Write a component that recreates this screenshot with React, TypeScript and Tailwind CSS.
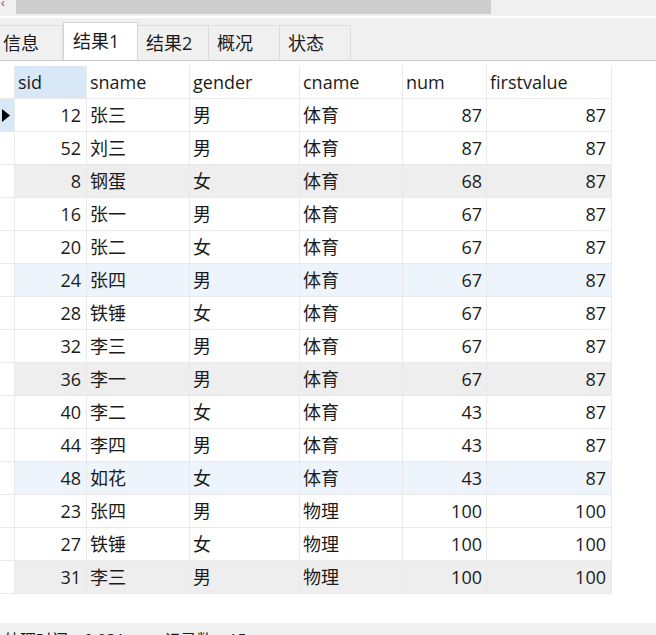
import React from "react";

type Row = {
  sid: number;
  sname: string;
  gender: string;
  cname: string;
  num: number;
  firstvalue: number;
  tone?: "gray" | "blue";
  current?: boolean;
};

const rows: Row[] = [
  { sid: 12, sname: "张三", gender: "男", cname: "体育", num: 87, firstvalue: 87, current: true },
  { sid: 52, sname: "刘三", gender: "男", cname: "体育", num: 87, firstvalue: 87 },
  { sid: 8, sname: "钢蛋", gender: "女", cname: "体育", num: 68, firstvalue: 87, tone: "gray" },
  { sid: 16, sname: "张一", gender: "男", cname: "体育", num: 67, firstvalue: 87 },
  { sid: 20, sname: "张二", gender: "女", cname: "体育", num: 67, firstvalue: 87 },
  { sid: 24, sname: "张四", gender: "男", cname: "体育", num: 67, firstvalue: 87, tone: "blue" },
  { sid: 28, sname: "铁锤", gender: "女", cname: "体育", num: 67, firstvalue: 87 },
  { sid: 32, sname: "李三", gender: "男", cname: "体育", num: 67, firstvalue: 87 },
  { sid: 36, sname: "李一", gender: "男", cname: "体育", num: 67, firstvalue: 87, tone: "gray" },
  { sid: 40, sname: "李二", gender: "女", cname: "体育", num: 43, firstvalue: 87 },
  { sid: 44, sname: "李四", gender: "男", cname: "体育", num: 43, firstvalue: 87 },
  { sid: 48, sname: "如花", gender: "女", cname: "体育", num: 43, firstvalue: 87, tone: "blue" },
  { sid: 23, sname: "张四", gender: "男", cname: "物理", num: 100, firstvalue: 100 },
  { sid: 27, sname: "铁锤", gender: "女", cname: "物理", num: 100, firstvalue: 100 },
  { sid: 31, sname: "李三", gender: "男", cname: "物理", num: 100, firstvalue: 100, tone: "gray" },
];

const tabs = ["信息", "结果1", "结果2", "概况", "状态"];

const cell = "h-[33px] shrink-0 border-r border-b border-[#e9e9e9] flex items-center";

export default function App() {
  return (
    <div
      className="relative h-[635px] w-[656px] overflow-hidden bg-white text-[18px] text-[#1b1b1b]"
      style={{ fontFamily: '"Open Sans", "Noto Sans CJK SC", sans-serif' }}
    >
      {/* horizontal scrollbar of the pane above */}
      <div className="flex h-[16px] items-start bg-[#f0f0f0]">
        <div className="w-[16px] pl-[1px] text-[12px] leading-[6px] text-[#555]">‹</div>
        <div className="h-[14px] w-[475px] bg-[#cdcdcd]" />
      </div>
      <div className="h-[2px] bg-white" />

      {/* tabs */}
      <div className="flex h-[43px] items-end border-b border-[#c9c9c9] bg-[#f0f0f0]">
        {tabs.map((t, i) =>
          i === 1 ? (
            <div
              key={t}
              className="flex h-[38px] w-[75px] items-center border-x border-t border-[#d6d6d6] bg-white pb-[2px] pl-[9px] leading-none"
            >
              {t}
            </div>
          ) : (
            <div
              key={t}
              className={
                "flex h-[35px] items-center border-t border-r border-[#dcdcdc] leading-none " +
                (i === 0 ? "w-[63px] pl-[3px]" : "w-[71px] pl-[8px]")
              }
            >
              {t}
            </div>
          ),
        )}
      </div>
      <div className="h-[5px] bg-white" />

      {/* grid */}
      <div className="w-[612px]">
        <div className="flex">
          <div className={cell + " w-[15px] border-[#dedede]"} />
          <div className={cell + " w-[72px] bg-[#d9e8f7] pl-[3px]"}>sid</div>
          <div className={cell + " w-[103px] pl-[3px]"}>sname</div>
          <div className={cell + " w-[110px] pl-[3px]"}>gender</div>
          <div className={cell + " w-[103px] pl-[3px]"}>cname</div>
          <div className={cell + " w-[84px] pl-[3px]"}>num</div>
          <div className={cell + " w-[125px] pl-[3px]"}>firstvalue</div>
        </div>
        {rows.map((r) => {
          const bg =
            r.tone === "gray" ? "bg-[#eeeeee]" : r.tone === "blue" ? "bg-[#edf4fc]" : "bg-white";
          return (
            <div key={r.sid} className="flex">
              <div
                className={
                  cell +
                  " w-[15px] border-[#dedede] pl-[2px] " +
                  (r.current ? "bg-[#d9e8f7]" : "bg-white")
                }
              >
                {r.current && (
                  <svg width="8" height="13" viewBox="0 0 8 13">
                    <path d="M0 0 L8 6.5 L0 13 Z" fill="#000" />
                  </svg>
                )}
              </div>
              <div className={cell + " w-[72px] justify-end pr-[5px] " + bg}>{r.sid}</div>
              <div className={cell + " w-[103px] pl-[3px] " + bg}>{r.sname}</div>
              <div className={cell + " w-[110px] pl-[3px] " + bg}>{r.gender}</div>
              <div className={cell + " w-[103px] pl-[3px] " + bg}>{r.cname}</div>
              <div className={cell + " w-[84px] justify-end pr-[4px] " + bg}>{r.num}</div>
              <div className={cell + " w-[125px] justify-end pr-[5px] " + bg}>{r.firstvalue}</div>
            </div>
          );
        })}
      </div>

      <div className="h-[29px]" />
      {/* status strip, cut at the bottom edge */}
      <div className="h-[40px] bg-[#f0f0f0] pl-[4px] pt-[7px] text-[16px] leading-[20px]">
        处理时间：0.031s　　记录数：15
      </div>
    </div>
  );
}
